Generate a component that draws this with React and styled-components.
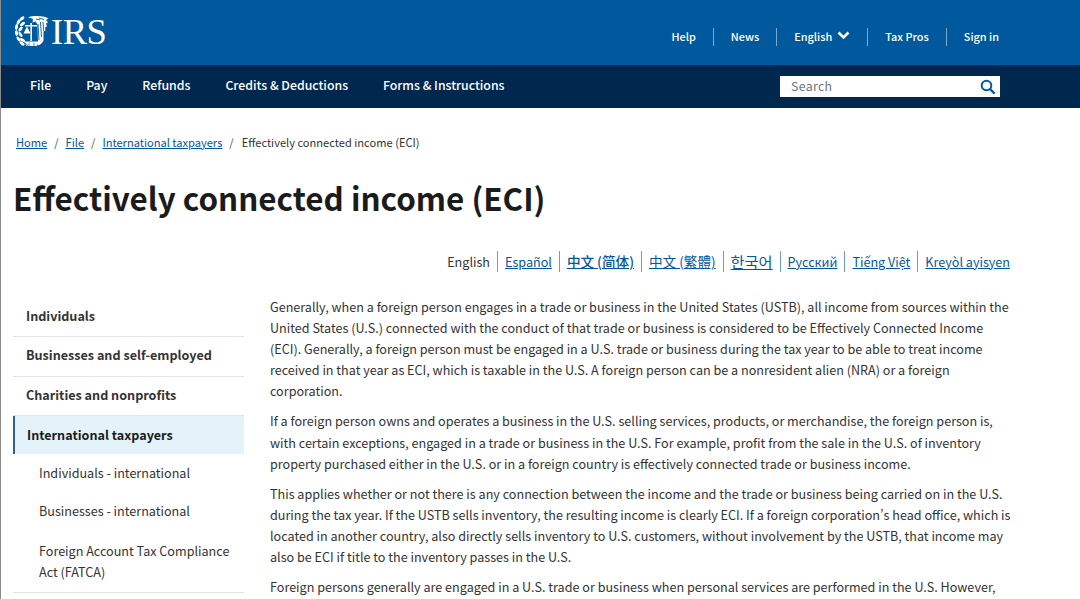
import styled, { createGlobalStyle } from 'styled-components'

const GlobalStyle = createGlobalStyle`
  html, body {
    margin: 0;
    padding: 0;
    height: 599px;
    overflow: hidden;
    background: #fff;
  }
  * { box-sizing: border-box; }
`

const font = `"Noto Sans CJK SC", "Noto Sans", sans-serif`

const topLinks = ['Help', 'News', 'English', 'Tax Pros', 'Sign in']
const mainLinks = ['File', 'Pay', 'Refunds', 'Credits & Deductions', 'Forms & Instructions']
const langs = [
  { name: 'Español' },
  { name: '中文 (简体)', size: 13.6, strong: true },
  { name: '中文 (繁體)', size: 13.6 },
  { name: '한국어', size: 15.2 },
  { name: 'Русский' },
  { name: 'Tiếng Việt' },
  { name: 'Kreyòl ayisyen' },
]

// leaves of the wreath, x / y / angle
const leaves = [
  [8, 3.5, 50], [4.5, 7, 30], [8.5, 9, 55], [2.5, 12, 10], [6.5, 14, 40],
  [2.5, 18, -10], [6.5, 19.5, -35], [4.5, 24, -35], [8.5, 25, -60], [8, 28.5, -55],
]

const Logo = () => (
  <LogoWrap>
    <svg width="35" height="32" viewBox="0 0 35 32" fill="#fff">
      {leaves.map(([x, y, a]) => (
        <ellipse key={`${x}-${y}`} cx={x} cy={y} rx="1.5" ry="2.9" transform={`rotate(${a} ${x} ${y})`} />
      ))}
      {/* scales */}
      <path d="M16.4 8h1.6v18h-1.6zM11 10h12v1.4H11z" />
      <path d="M9.5 18.5h7l-3.5-7z" />
      <path d="M10 26.5h15l-2.5 4.5h-10z" />
      <path d="M11 28l3 3M15 27.5v3.5M20 27.5v3.5" stroke="#00599c" strokeWidth="0.7" fill="none" />
      {/* eagle */}
      <path d="M14 2.5C19 .5 29 .5 34.5 3.5L32 5l2 2.5-2 1 1 3-2 1 .5 3-2 1 0 9c-1.5 3-3.5 4.5-6 5l.5-4-.5-17-2-3-3 1 .5-3.5-2.5-1z" />
      <path d="M24 9l1 16M26.5 7l1 15M29 7l.7 9M22 4l4 1M25 3l5 1.6" stroke="#00599c" strokeWidth="0.9" fill="none" />
    </svg>
    <LogoText>IRS</LogoText>
  </LogoWrap>
)

export default function App() {
  return (
    <Page>
      <GlobalStyle />
      <TopBar>
        <Logo />
        <TopNav>
          {topLinks.map((link) => (
            <TopLink key={link}>
              {link}
              {link === 'English' && (
                <svg width="13" height="9" viewBox="0 0 13 9" fill="none">
                  <path d="M1.5 1.5L6.5 6.5L11.5 1.5" stroke="#fff" strokeWidth="2.6" />
                </svg>
              )}
            </TopLink>
          ))}
        </TopNav>
      </TopBar>
      <MainBar>
        <MainNav>
          {mainLinks.map((link) => (
            <MainLink key={link}>{link}</MainLink>
          ))}
        </MainNav>
        <SearchBox>
          <SearchText>Search</SearchText>
          <svg width="16" height="16" viewBox="0 0 16 16" fill="none">
            <circle cx="6.5" cy="6.5" r="4.8" stroke="#00599c" strokeWidth="2" />
            <path d="M10 10l4.6 4.6" stroke="#00599c" strokeWidth="2.4" />
          </svg>
        </SearchBox>
      </MainBar>
      <Content>
        <Crumbs>
          <a>Home</a>
          <Slash>/</Slash>
          <a>File</a>
          <Slash>/</Slash>
          <a>International taxpayers</a>
          <Slash>/</Slash>
          <span>Effectively connected income (ECI)</span>
        </Crumbs>
        <Title>Effectively connected income (ECI)</Title>
        <LangRow>
          <LangItem>English</LangItem>
          {langs.map((lang) => (
            <LangItem key={lang.name} $size={lang.size} $strong={lang.strong}>
              <a>{lang.name}</a>
            </LangItem>
          ))}
        </LangRow>
        <Columns>
          <Sidebar>
            <SideItem>Individuals</SideItem>
            <SideItem>Businesses and self-employed</SideItem>
            <SideItem>Charities and nonprofits</SideItem>
            <SideActive>International taxpayers</SideActive>
            <SubItem>Individuals - international</SubItem>
            <SubItem>Businesses - international</SubItem>
            <SubItem $last>Foreign Account Tax Compliance Act (FATCA)</SubItem>
          </Sidebar>
          <Article>
            <p>
              Generally, when a foreign person engages in a trade or business in the United States (USTB), all income from sources within the United States (U.S.) connected with the conduct of that trade or business is considered to be Effectively Connected Income (ECI). Generally, a foreign person must be engaged in a U.S. trade or business during the tax year to be able to treat income received in that year as ECI, which is taxable in the U.S. A foreign person can be a nonresident alien (NRA) or a foreign corporation.
            </p>
            <p>
              If a foreign person owns and operates a business in the U.S. selling services, products, or merchandise, the foreign person is, with certain exceptions, engaged in a trade or business in the U.S. For example, profit from the sale in the U.S. of inventory property purchased either in the U.S. or in a foreign country is effectively connected trade or business income.
            </p>
            <p>
              This applies whether or not there is any connection between the income and the trade or business being carried on in the U.S. during the tax year. If the USTB sells inventory, the resulting income is clearly ECI. If a foreign corporation’s head office, which is located in another country, also directly sells inventory to U.S. customers, without involvement by the USTB, that income may also be ECI if title to the inventory passes in the U.S.
            </p>
            <p>
              Foreign persons generally are engaged in a U.S. trade or business when personal services are performed in the U.S. However,
            </p>
          </Article>
        </Columns>
      </Content>
    </Page>
  )
}

const Page = styled.div`
  height: 599px;
  overflow: hidden;
  font-family: ${font};
  color: #1b1b1b;
  border-left: 1px solid #8a8a8a;
`

const TopBar = styled.header`
  height: 65px;
  background: #00599c;
  display: flex;
  align-items: center;
  justify-content: space-between;
  padding: 0 64px 0 13px;
`

const LogoWrap = styled.div`
  display: flex;
  align-items: center;
  gap: 2px;
  margin-top: -3px;
`

const LogoText = styled.span`
  font-family: "Liberation Serif", serif;
  font-size: 36.5px;
  line-height: 37px;
  color: #fff;
  letter-spacing: -0.5px;
`

const TopNav = styled.nav`
  display: flex;
  align-items: center;
  margin-top: 8px;
`

const TopLink = styled.a`
  display: flex;
  align-items: center;
  gap: 5px;
  height: 18px;
  padding: 0 17px 2px;
  font-size: 10.9px;
  line-height: 16px;
  font-weight: 500;
  color: #fff;
  border-left: 1px solid #7fa9cb;
  &:first-child { border-left: 0; }
`

const MainBar = styled.div`
  height: 43px;
  background: #00284f;
  display: flex;
  align-items: center;
  justify-content: space-between;
  padding: 0 80px 0 12px;
`

const MainNav = styled.nav`
  display: flex;
  align-items: center;
  gap: 35px;
  padding: 0 0 4px 17px;
`

const MainLink = styled.a`
  font-size: 12.3px;
  line-height: 20px;
  font-weight: 500;
  color: #fff;
`

const SearchBox = styled.div`
  width: 220px;
  height: 21px;
  background: #fff;
  display: flex;
  align-items: center;
  justify-content: space-between;
  padding: 0 4px 0 11px;
`

const SearchText = styled.span`
  font-size: 12.4px;
  line-height: 17px;
  color: #6f7680;
  letter-spacing: 0.3px;
`

const Content = styled.main`
  padding: 25px 70px 0 12px;
`

const Crumbs = styled.div`
  display: flex;
  align-items: center;
  padding-left: 3px;
  font-size: 11.1px;
  line-height: 18px;
  color: #333;
  a {
    color: #00599c;
    text-decoration: underline;
  }
  span:last-child {
    margin-left: 1px;
  }
`

const Slash = styled.span`
  margin: 0 7px;
  color: #555;
`

const Title = styled.h1`
  margin: 25px 0 0;
  font-size: 31.4px;
  line-height: 44px;
  font-weight: 700;
  color: #1b1b1b;
`

const LangRow = styled.div`
  display: flex;
  justify-content: flex-end;
  align-items: center;
  margin-top: 31px;
`

const LangItem = styled.div`
  height: 21px;
  padding: 0 7px;
  font-size: ${(p) => p.$size || 12.6}px;
  font-weight: ${(p) => (p.$strong ? 500 : 400)};
  line-height: 21px;
  color: #333;
  border-left: 1px solid #6a9cc4;
  &:first-child { border-left: 0; }
  &:last-child { padding-right: 0; }
  a {
    color: #00599c;
    text-decoration: underline;
  }
`

const Columns = styled.div`
  display: flex;
  gap: 26px;
  margin-top: 23px;
`

const Sidebar = styled.aside`
  width: 231px;
  flex: none;
  padding-top: 3px;
`

const SideItem = styled.div`
  height: 39.3px;
  padding: 0 13px 3px;
  display: flex;
  align-items: center;
  font-size: 12.6px;
  font-weight: 700;
  color: #333;
  border-bottom: 1px solid #e4e4e4;
`

const SideActive = styled.div`
  height: 38.5px;
  padding: 0 12px 2px;
  display: flex;
  align-items: center;
  font-size: 12.6px;
  font-weight: 700;
  color: #1b1b1b;
  background: #e3f3f9;
  border-left: 2px solid #2f5f93;
`

const SubItem = styled.div`
  padding: 8px 13px ${(p) => (p.$last ? '10px' : '9px')} 26px;
  margin-top: ${(p) => (p.$last ? '1.5px' : '0')};
  font-size: 12.6px;
  line-height: 21px;
  color: #333;
  border-bottom: ${(p) => (p.$last ? '1px solid #e4e4e4' : '0')};
`

const Article = styled.article`
  flex: 1;
  margin-right: -4px;
  padding-top: 1px;
  font-size: 12.6px;
  line-height: 21.1px;
  color: #333;
  font-feature-settings: "pwid";
  p {
    margin: 0 0 9px;
  }
`
